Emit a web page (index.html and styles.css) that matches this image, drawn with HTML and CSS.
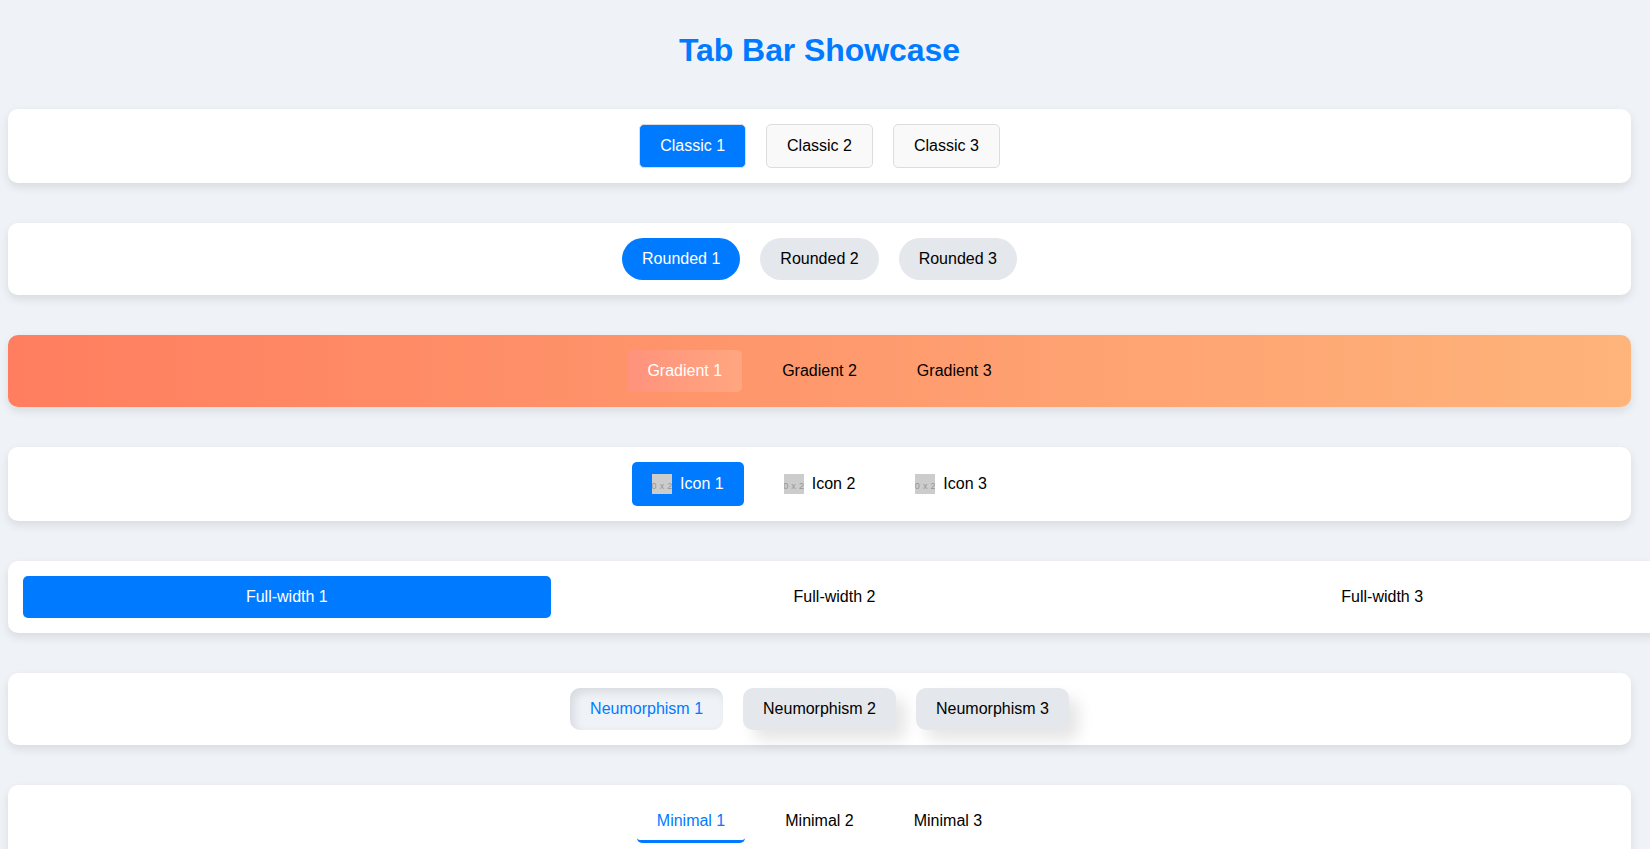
FILE: index.html
```html
<!DOCTYPE html>
<html lang="en">
<head>
<meta charset="UTF-8">
<title>Tab Bar Showcase</title>
<link rel="stylesheet" href="styles.css">
</head>
<body>
<main class="page">
<h1 class="title">Tab Bar Showcase</h1>
<div class="tab-bar classic">
  <div class="tab active">Classic 1</div><div class="tab">Classic 2</div><div class="tab">Classic 3</div>
</div>
<div class="tab-bar rounded">
  <div class="tab active">Rounded 1</div><div class="tab">Rounded 2</div><div class="tab">Rounded 3</div>
</div>
<div class="tab-bar gradient">
  <div class="tab active">Gradient 1</div><div class="tab">Gradient 2</div><div class="tab">Gradient 3</div>
</div>
<div class="tab-bar icons">
  <div class="tab active"><span class="icon"><span>0 x 2</span></span>Icon 1</div>
  <div class="tab"><span class="icon"><span>0 x 2</span></span>Icon 2</div>
  <div class="tab"><span class="icon"><span>0 x 2</span></span>Icon 3</div>
</div>
<div class="tab-bar full">
  <div class="tab active">Full-width 1</div><div class="tab">Full-width 2</div><div class="tab">Full-width 3</div>
</div>
<div class="tab-bar neumorphism">
  <div class="tab active">Neumorphism 1</div><div class="tab">Neumorphism 2</div><div class="tab">Neumorphism 3</div>
</div>
<div class="tab-bar minimal">
  <div class="tab active">Minimal 1</div><div class="tab">Minimal 2</div><div class="tab">Minimal 3</div>
</div>
</main>
</body>
</html>
```
FILE: styles.css
```css
body {
  margin: 0;
  background: #eff3f8;
  font-family: "Liberation Sans", Arial, sans-serif;
  font-size: 16px;
  color: #000;
}
.page {
  width: 1623px;
  height: 817px;
  padding: 32px 19px 0 8px;
  overflow: hidden;
}
.title {
  margin: 0;
  font-size: 32px;
  line-height: 37px;
  letter-spacing: -0.07px;
  text-align: center;
  color: #007bff;
}
.tab-bar {
  display: flex;
  justify-content: center;
  gap: 20px;
  margin: 40px 0;
  padding: 15px;
  background: #fff;
  border-radius: 10px;
  box-shadow: 0 4px 10px rgba(0, 0, 0, 0.1);
}
.tab {
  padding: 12px 20px;
  line-height: 18px;
  border-radius: 5px;
  text-align: center;
  white-space: nowrap;
}
.active {
  background: #007bff;
  color: #fff;
}
.classic .tab {
  border: 1px solid #ddd;
}
.classic .tab:not(.active) {
  background: #f9f9f9;
}
.rounded .tab {
  border-radius: 25px;
}
.rounded .tab:not(.active) {
  background: #e4e7eb;
}
.gradient {
  background: linear-gradient(to right, #ff7e5f, #feb47b);
}
.gradient .active {
  background: linear-gradient(to right, #ff927c, #ffa680);
}
.icons .tab {
  display: flex;
  align-items: center;
  gap: 8px;
}
.icon {
  display: flex;
  align-items: center;
  justify-content: center;
  width: 20px;
  height: 20px;
  overflow: hidden;
  background: #ccc;
  color: #969696;
  font-size: 9px;
  letter-spacing: 0.3px;
}
.icon span {
  flex: none;
  padding-top: 4px;
}
.full {
  width: 100%;
}
.full .tab {
  flex: 1;
}
.neumorphism .tab {
  border-radius: 10px;
  background: #e4e7eb;
  box-shadow: 10px 10px 15px rgba(0, 0, 0, 0.1);
}
.neumorphism .active {
  background: #eff3f8;
  color: #007bff;
  box-shadow: inset 4px 4px 10px rgba(0, 0, 0, 0.1);
}
.minimal .tab {
  padding-bottom: 10px;
  border-bottom: 3px solid transparent;
}
.minimal .active {
  background: none;
  color: #007bff;
  border-bottom-color: #007bff;
}
```
